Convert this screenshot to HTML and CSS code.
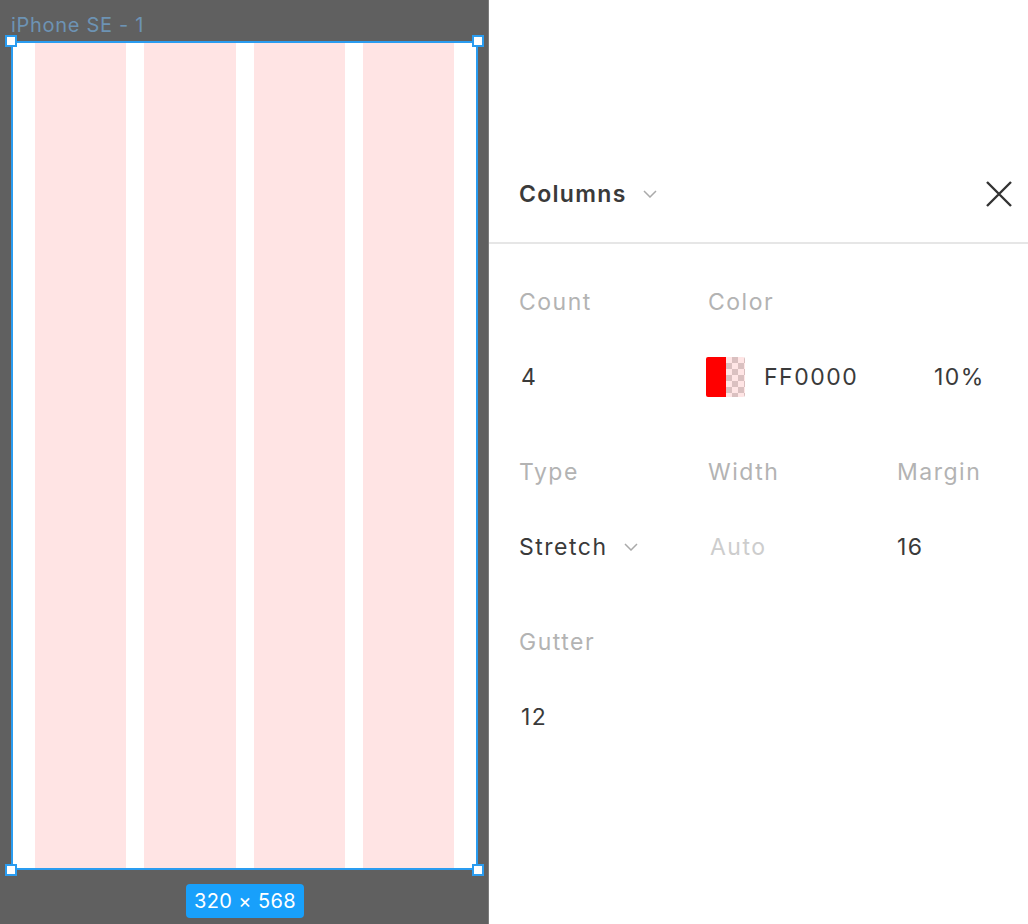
FILE: index.html
```html
<!DOCTYPE html>
<html lang="en">

<head>
    <meta charset="UTF-8">
    <meta name="viewport" content="width=device-width, initial-scale=1.0">
    <title>Layout grid</title>
    <link rel="stylesheet" href="styles.css">
</head>

<body>
    <div class="canvas">
        <div class="frame-name">iPhone SE - 1</div>
        <div class="frame">
            <div class="grid-col"></div>
            <div class="grid-col"></div>
            <div class="grid-col"></div>
            <div class="grid-col"></div>
            <span class="handle tl"></span>
            <span class="handle tr"></span>
            <span class="handle bl"></span>
            <span class="handle br"></span>
        </div>
        <div class="frame-size">320 × 568</div>
    </div>

    <div class="panel">
        <div class="panel-head">
            <div class="panel-title">
                Columns
                <svg class="chevron" width="14" height="8" viewBox="0 0 14 8">
                    <path d="M1 1l6 6 6-6" fill="none" stroke="currentColor" stroke-width="1.5" />
                </svg>
            </div>
            <svg class="close" width="28" height="28" viewBox="0 0 28 28">
                <path d="M2 2l24 24M26 2L2 26" fill="none" stroke="currentColor" stroke-width="2.4" />
            </svg>
        </div>

        <div class="fields">
            <div class="field">
                <div class="label">Count</div>
                <div class="value num">4</div>
            </div>
            <div class="field wide">
                <div class="label">Color</div>
                <div class="value">
                    <span class="swatch"><i></i><b></b></span>
                    <span class="hex">FF0000</span>
                    <span class="alpha">10%</span>
                </div>
            </div>

            <div class="field">
                <div class="label">Type</div>
                <div class="value">
                    Stretch
                    <svg class="chevron" width="14" height="8" viewBox="0 0 14 8">
                        <path d="M1 1l6 6 6-6" fill="none" stroke="currentColor" stroke-width="1.5" />
                    </svg>
                </div>
            </div>
            <div class="field">
                <div class="label">Width</div>
                <div class="value muted num">Auto</div>
            </div>
            <div class="field">
                <div class="label">Margin</div>
                <div class="value">16</div>
            </div>

            <div class="field">
                <div class="label">Gutter</div>
                <div class="value num">12</div>
            </div>
        </div>
    </div>
</body>

</html>
```

FILE: styles.css
```css
* {
    box-sizing: border-box;
}

body {
    margin: 0;
    height: 924px;
    display: flex;
    font-family: Inter, "Noto Sans", sans-serif;
    overflow: hidden;
}

/* canvas side */

.canvas {
    flex-shrink: 0;
    width: 489px;
    background: #606060;
    border-right: 1px solid #7c7c7c;
    padding: 12px 0 0 11px;
}

.frame-name {
    height: 29px;
    font-size: 20px;
    line-height: 26px;
    letter-spacing: 0.7px;
    color: #6d93b4;
}

.frame {
    position: relative;
    width: 467px;
    height: 829px;
    border: 2px solid #2a9cf0;
    background: #fff;
    display: flex;
    gap: 18px;
    padding: 0 22px;
}

.grid-col {
    flex: 1;
    background: #ffe4e4;
}

.handle {
    position: absolute;
    width: 12px;
    height: 12px;
    background: #fff;
    border: 2px solid #2a9cf0;
}

.handle.tl { left: -8px; top: -8px; }
.handle.tr { right: -8px; top: -8px; }
.handle.bl { left: -8px; bottom: -8px; }
.handle.br { right: -8px; bottom: -8px; }

.frame-size {
    width: 118px;
    height: 34px;
    margin: 14px 0 0 175px;
    background: #18a0fb;
    border-radius: 4px;
    color: #fff;
    font-size: 20px;
    line-height: 34px;
    letter-spacing: 0.4px;
    text-align: center;
}

/* properties panel */

.panel {
    flex: 1;
    min-width: 0;
    background: #fff;
}

.panel-head {
    height: 244px;
    padding: 170px 15px 24px 30px;
    border-bottom: 2px solid #e6e6e6;
    display: flex;
    align-items: center;
    justify-content: space-between;
}

.panel-title {
    display: flex;
    align-items: center;
    gap: 16px;
    font-size: 23px;
    font-weight: 600;
    letter-spacing: 1.3px;
    color: #3a3a3a;
}

.chevron {
    color: #aaa;
}

.close {
    color: #333;
}

.fields {
    display: grid;
    grid-template-columns: 189px 189px 1fr;
    row-gap: 63px;
    padding: 46px 0 0 30px;
}

.field.wide {
    grid-column: span 2;
}

.field .label {
    height: 24px;
    line-height: 24px;
    font-size: 23px;
    letter-spacing: 1.5px;
    color: #b3b3b3;
    margin-bottom: 43px;
}

.field .value {
    height: 40px;
    display: flex;
    align-items: center;
    gap: 16px;
    font-size: 23px;
    letter-spacing: 1.5px;
    color: #3a3a3a;
}

.field .value.num {
    padding-left: 2px;
}

.field .value.muted {
    color: #cdcdcd;
}

.swatch {
    display: flex;
    width: 39px;
    height: 40px;
    border-radius: 2px;
    overflow: hidden;
    margin-left: -2px;
}

.swatch i {
    width: 20px;
    background: #f00;
}

.swatch b {
    width: 19px;
    background:
        linear-gradient(rgba(255, 0, 0, 0.1), rgba(255, 0, 0, 0.1)),
        repeating-conic-gradient(#d6d6d6 0 25%, #fff 0 50%) 0 0 / 12px 12px;
}

.hex {
    margin-left: 3px;
    width: 154px;
}
```
